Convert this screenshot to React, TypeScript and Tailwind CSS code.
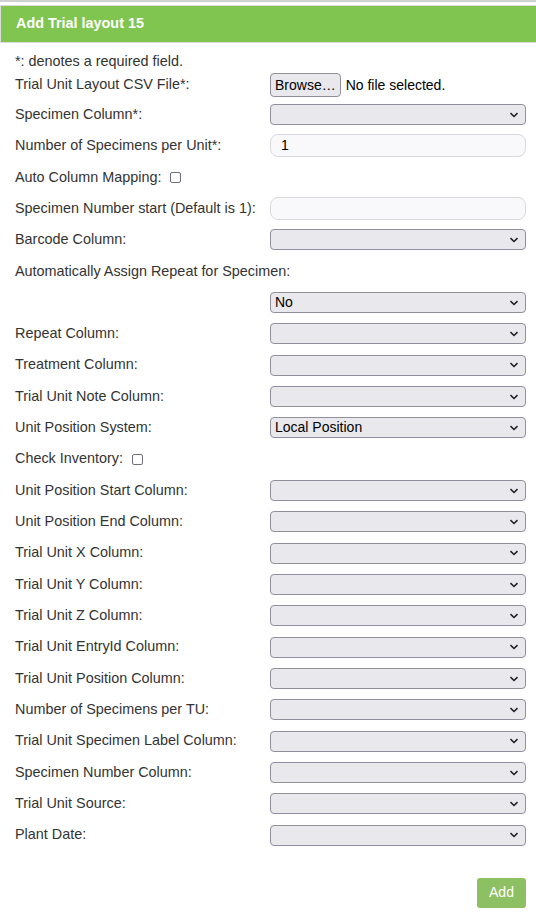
import React from "react";

const Chevron = () => (
  <svg width="10" height="6" viewBox="0 0 10 6" className="absolute right-[6px] top-1/2 -translate-y-1/2">
    <path d="M1.5 1.2 L5 4.5 L8.5 1.2" fill="none" stroke="#222" strokeWidth="1.6" />
  </svg>
);

const Select = ({ value }: { value?: string }) => (
  <div className="relative w-[256px] h-[21px] bg-[#e9e9ed] border border-[#8f8f9d] rounded-[4px] text-[14px] text-black leading-[19px] pl-[4px]">
    {value}
    <Chevron />
  </div>
);

const TextInput = ({ value }: { value?: string }) => (
  <div className="w-[256px] h-[23px] bg-[#f9f9fb] border border-[#d8d8de] rounded-[8px] text-[14px] text-black leading-[21px] pl-[10px]">
    {value}
  </div>
);

const Checkbox = () => (
  <span className="inline-block w-[11px] h-[11px] border border-[#6f6f7a] rounded-[2px] bg-white ml-[9px] align-middle" />
);

type Row = { label: string; kind: "select" | "input" | "check" | "none"; value?: string };

const rows: Row[] = [
  { label: "Specimen Column*:", kind: "select" },
  { label: "Number of Specimens per Unit*:", kind: "input", value: "1" },
  { label: "Auto Column Mapping:", kind: "check" },
  { label: "Specimen Number start (Default is 1):", kind: "input" },
  { label: "Barcode Column:", kind: "select" },
  { label: "Automatically Assign Repeat for Specimen:", kind: "none" },
  { label: "", kind: "select", value: "No" },
  { label: "Repeat Column:", kind: "select" },
  { label: "Treatment Column:", kind: "select" },
  { label: "Trial Unit Note Column:", kind: "select" },
  { label: "Unit Position System:", kind: "select", value: "Local Position" },
  { label: "Check Inventory:", kind: "check" },
  { label: "Unit Position Start Column:", kind: "select" },
  { label: "Unit Position End Column:", kind: "select" },
  { label: "Trial Unit X Column:", kind: "select" },
  { label: "Trial Unit Y Column:", kind: "select" },
  { label: "Trial Unit Z Column:", kind: "select" },
  { label: "Trial Unit EntryId Column:", kind: "select" },
  { label: "Trial Unit Position Column:", kind: "select" },
  { label: "Number of Specimens per TU:", kind: "select" },
  { label: "Trial Unit Specimen Label Column:", kind: "select" },
  { label: "Specimen Number Column:", kind: "select" },
  { label: "Trial Unit Source:", kind: "select" },
  { label: "Plant Date:", kind: "select" },
];

export default function App() {
  return (
    <div className="w-[536px] h-[914px] bg-white overflow-hidden text-[#333] text-[14.4px]" style={{ fontFamily: '"Liberation Sans", Arial, sans-serif' }}>
      <div className="h-[2px] bg-[#d0d0d0]" />
      <div className="mt-[3px] h-[38px] bg-[#80c550] border border-r-0 border-[#dcdcdc] flex items-center pl-[15px]">
        <span className="text-white font-bold text-[14.4px]">Add Trial layout 15</span>
      </div>
      <div className="pl-[15px] pr-[10px]">
        <div className="h-[19px] mt-[9px] leading-[19px]">*: denotes a required field.</div>
        <div className="flex items-center h-[28px]">
          <div className="w-[255px]">Trial Unit Layout CSV File*:</div>
          <div className="h-[24px] px-[4px] bg-[#e9e9ed] border border-[#8f8f9d] rounded-[4px] text-black text-[14px] leading-[22px]">Browse…</div>
          <span className="ml-[5px] text-black text-[14px]">No file selected.</span>
        </div>
        {rows.map((r, i) => (
          <div key={i} className="flex items-center h-[31.33px]">
            {r.kind === "check" ? (
              <div className="flex items-center">
                <span>{r.label}</span>
                <Checkbox />
              </div>
            ) : (
              <div className="w-[255px] whitespace-nowrap">{r.label}</div>
            )}
            {r.kind === "select" && <Select value={r.value} />}
            {r.kind === "input" && <TextInput value={r.value} />}
          </div>
        ))}
        <div className="flex justify-end mt-[27px]">
          <div className="w-[49px] h-[30px] bg-[#8dbf63] rounded-[3px] text-white flex items-center justify-center text-[14px]">Add</div>
        </div>
      </div>
    </div>
  );
}
